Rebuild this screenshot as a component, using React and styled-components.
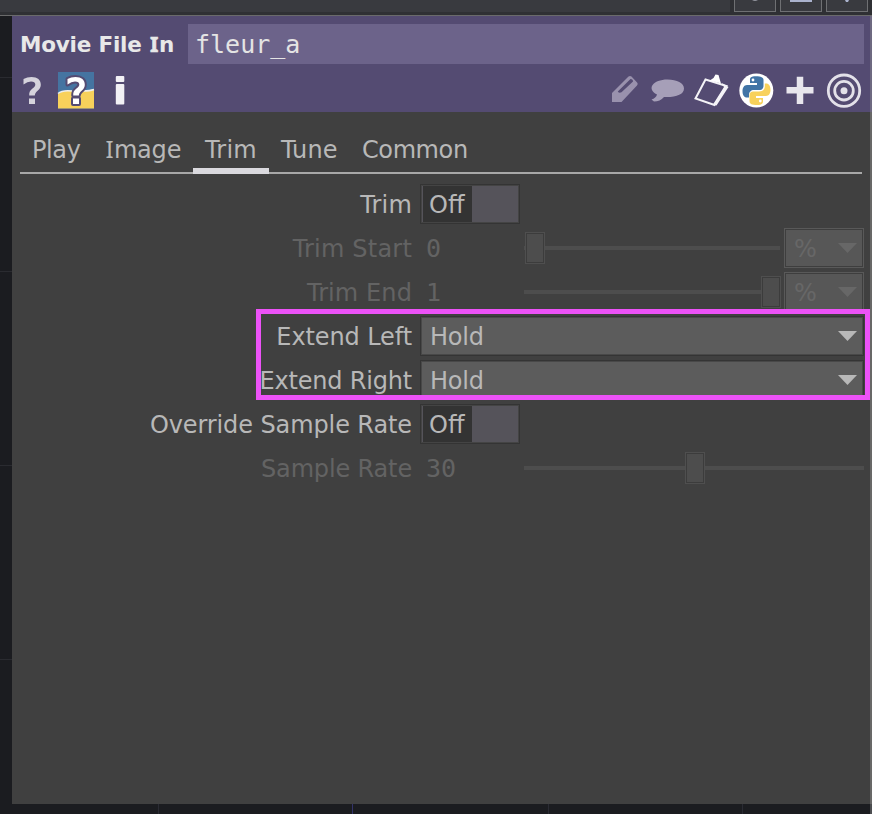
import React from "react";
import styled, { createGlobalStyle, css } from "styled-components";

const Global = createGlobalStyle`
  * { box-sizing: border-box; }
  html, body { margin: 0; padding: 0; background: #1b1c20; overflow: hidden; }
`;

const Window = styled.div`
  position: relative;
  width: 872px;
  height: 814px;
  display: flex;
  flex-direction: column;
  background: #1b1c20;
  font-family: "DejaVu Sans", Verdana, sans-serif;
  font-size: 24px;
  color: #b8b8b8;
  overflow: hidden;
`;

const TopBar = styled.div`
  flex: none;
  height: 16px;
  display: flex;
  background: #2f3034;
  border-bottom: 1px solid #6a6a6b;
`;

const TopBarFill = styled.div`
  width: 730px;
  height: 12px;
  margin-right: 4px;
  background: #393a3f;
`;

const TopButton = styled.div`
  width: 42px;
  height: 12px;
  margin-right: 4px;
  display: flex;
  justify-content: center;
  background: #393a3f;
  border: 1px solid #6f7073;
  border-top: 0;
`;

const Middle = styled.div`
  display: flex;
  height: 788px;
`;

const LeftGrid = styled.div`
  flex: none;
  width: 12px;
  display: grid;
  grid-template-rows: 62px 194px 194px 194px 1fr;
`;

const GridRow = styled.div`
  border-bottom: ${(p) => (p.$last ? "0" : "1px solid #2a2b30")};
`;

const BottomGrid = styled.div`
  display: grid;
  height: 10px;
  grid-template-columns: 159px 194px 196px 194px 127px 2px;
`;

const GridColumn = styled.div`
  border-right: 1px solid ${(p) => p.$line || "#2a2b33"};
`;

const Edge = styled.div`
  width: 2px;
  background: ${(p) => p.$color || "#686867"};
`;

const EdgeTop = styled.div`
  height: 96px;
  background: #6e6981;
`;

const Panel = styled.section`
  width: 858px;
  background: #404040;
`;

const Header = styled.header`
  height: 96px;
  background: #544b72;
`;

const NameRow = styled.div`
  display: flex;
  align-items: center;
  padding-top: 8px;
`;

const OperatorType = styled.div`
  width: 176px;
  height: 40px;
  padding-left: 8px;
  font-size: 21.5px;
  font-weight: bold;
  line-height: 42px;
  letter-spacing: -0.2px;
  color: #e8e8e8;
  white-space: nowrap;
`;

const SerifCap = styled.span`
  font-family: "Noto Sans", sans-serif;
  line-height: 1;
  margin: 0 ${(p) => (p.$bold ? 1 : 0.5)}px;
  -webkit-text-stroke: ${(p) => (p.$bold ? "0.6px #e8e8e8" : "0")};
`;

const OperatorName = styled.div`
  width: 676px;
  height: 40px;
  padding-left: 7px;
  background: #6c638a;
  font-family: "DejaVu Sans Mono", monospace;
  font-size: 25px;
  line-height: 42px;
  color: #e4e4e4;
`;

const ToolRow = styled.div`
  display: flex;
  justify-content: space-between;
  height: 48px;
`;

const ToolGroup = styled.div`
  display: flex;
  svg { display: block; }
`;

const Tabs = styled.nav`
  display: flex;
  width: 842px;
  height: 48px;
  margin: 14px 0 0 8px;
  border-bottom: 2px solid #a8a8a8;
`;

const Tab = styled.div`
  width: ${(p) => p.$width}px;
  height: 48px;
  padding-left: 12px;
  line-height: 49px;
  letter-spacing: ${(p) => p.$tracking || 0}px;
  white-space: nowrap;
  border-bottom: ${(p) => (p.$active ? "6px solid #dad9de" : "0")};
`;

const Form = styled.div`
  display: flex;
  flex-direction: column;
  gap: 4px;
  margin-top: 10px;
`;

const Row = styled.div`
  display: flex;
  height: 40px;
  color: ${(p) => (p.$disabled ? "#636363" : "#b8b8b8")};
`;

const Label = styled.div`
  width: 400px;
  margin-right: 8px;
  text-align: right;
  line-height: 42px;
  white-space: nowrap;
  letter-spacing: ${(p) => p.$tracking || 0}px;
`;

const Toggle = styled.div`
  width: 100px;
  height: 40px;
  display: flex;
  padding: 1px;
  border: 1px solid #343434;
  background: linear-gradient(#55535a, #55535a) content-box, #444;
`;

const ToggleState = styled.div`
  width: 49px;
  height: 36px;
  margin-left: 1px;
  padding-left: 6px;
  background: #333;
  line-height: 38px;
`;

const Value = styled.div`
  width: 104px;
  padding-left: 6px;
  font-family: "DejaVu Sans Mono", monospace;
  font-size: 25px;
  line-height: 41px;
`;

const Slider = styled.div`
  width: ${(p) => p.$width}px;
  display: flex;
  align-items: center;
`;

const trackFill = css`
  height: 4px;
  background: #4d4d4d;
`;

const TrackBefore = styled.div`
  ${trackFill}
  width: ${(p) => p.$width}px;
`;

const TrackAfter = styled.div`
  ${trackFill}
  flex: 1;
`;

const Handle = styled.div`
  width: 20px;
  height: 32px;
  flex: none;
  border: 1px solid #4f4f4f;
  background: #4d4d4d;
  box-shadow: inset 0 0 0 1px #3c3c3c;
`;

const Select = styled.div`
  display: flex;
  align-items: center;
  justify-content: space-between;
  width: ${(p) => p.$width}px;
  height: 40px;
  padding: 0 6px 0 9px;
  border: 1px solid #343434;
  box-shadow: inset 0 0 0 1px #484848;
  background: #5c5c5c;
  color: #b8b8b8;
`;

const SelectText = styled.span`
  height: 38px;
  line-height: 40px;
  letter-spacing: -0.2px;
`;

const UnitSelect = styled(Select)`
  margin-left: auto;
  margin-right: 6px;
  border-color: #595959;
  box-shadow: inset 0 0 0 1px #3e3e3e;
  background: #575757;
  color: #676767;
`;

const Callout = styled.div`
  position: absolute;
  left: 256px;
  top: 309px;
  width: 614px;
  height: 91px;
  border: 5px solid #ec52f7;
`;

const Arrow = () => (
  <svg width="19" height="10" viewBox="0 0 19 10">
    <path d="M0 0H19L9.5 10Z" fill="currentColor" />
  </svg>
);

const questionPath = "M1.500 3.500Q5 1.500 9.500 1.500C15.500 1.500 18.800 4.500 18.800 9C18.800 13 16.500 14.500 14.300 16.500Q12.800 18 12.800 20H7.200C7 16.500 8 15 10.500 13C12.500 11.500 13.300 10.500 13.300 9C13.300 7 11.800 6 9 6Q5.500 6 1.500 9ZM7 23H13V28.500H7Z";

const LeftTools = () => (
  <svg width="130" height="48" viewBox="12 64 130 48">
    <g transform="translate(22 75.5)">
      <path d={questionPath} fill="#d5d3dc" />
    </g>
    <rect x="58" y="72" width="36" height="36.500" fill="#4574a1" />
    <path d="M58 94Q64 89 74 91Q88 91 94 89V108.500H58Z" fill="#f8d15b" />
    <path d="M58 93.500Q62 90 72 91M83 91Q90 91 94 89.500" stroke="#eee" strokeWidth="1.500" fill="none" />
    <g transform="translate(66 75.500)">
      <path d={questionPath} fill="#fff" stroke="#544b72" strokeWidth="4" strokeLinejoin="round" paintOrder="stroke" />
    </g>
    <rect x="115.800" y="76" width="8.500" height="6" rx="1" fill="#f2f1f5" />
    <rect x="115.800" y="84" width="8.500" height="20.500" rx="1" fill="#f2f1f5" />
  </svg>
);

const RightTools = () => (
  <svg width="270" height="48" viewBox="600 64 270 48">
    <path d="M612 102V93L628.500 76.500Q630 75.500 631.500 76.500L637.500 83Q638 84 637 85.500L621.500 102ZM617.800 91.500Q619 93.500 621.500 92.300L633 81.500Q633 79 630.500 79Z" fill="#9991ad" fillRule="evenodd" />
    <path d="M667.500 79.500C677 79.500 684 83 684 88.500C684 94.500 676 97.500 664 97Q660 101.500 654 101.500L651.500 99.500Q656 98 657 94.500C646 89 653 79.500 667.500 79.500Z" fill="#a69fb8" />
    <path d="M705.500 79.500L726.500 86L714.500 105L695.500 98.500Z" fill="none" stroke="#f4f3f7" strokeWidth="2" />
    <path d="M722 83L728.500 87L716.500 105.500L713 104.500L724 87Z" fill="#f4f3f7" />
    <path d="M709 81L713.500 78L715.500 74.500L718.500 75L719.500 78.500L721 83.500L716 82Z" fill="#fff" />
    <circle cx="756.300" cy="90.500" r="17" fill="#fff" />
    <path d="M756 76.300C750.500 76.300 750 78 750 80V83H757V85H747C744 85 742.500 88 742.500 91C742.500 95 744 97.500 747 97.500H749V95C749 92 751 90 754 90H760C762 90 763.500 88 763.500 86V80C763.500 77.500 761 76.300 756 76.300Z" fill="#4174a6" />
    <path d="M757 105C762.500 105 763 103 763 101V98H756V96H766C769 96 770.500 93 770.500 90C770.500 86 769 83.500 766 83.500H764.800V86.500C764.800 90 762 91.500 759 91.500H753C751 91.500 749.500 93 749.500 95V101C749.500 104 752 105 757 105Z" fill="#f8d15b" />
    <circle cx="753" cy="80" r="1.400" fill="#fff" />
    <circle cx="760.300" cy="101" r="1.400" fill="#fff" />
    <path d="M786.500 90.300H813.500M800 76.700V104" stroke="#e8e6ed" strokeWidth="6.500" />
    <g fill="none" stroke="#e3e1e9" strokeWidth="2.800">
      <circle cx="844" cy="90.700" r="15.700" />
      <circle cx="844" cy="90.700" r="9.300" />
    </g>
    <circle cx="844" cy="90.700" r="3.500" fill="#e3e1e9" />
  </svg>
);

export default function App() {
  return (
    <Window>
      <Global />
      <TopBar>
        <TopBarFill />
        <TopButton>
          <svg width="8" height="2"><path d="M1 0H7L5 1H3Z" fill="#8b8d96" /></svg>
        </TopButton>
        <TopButton>
          <svg width="22" height="2"><path d="M0 0H22V2H0Z" fill="#aab2cd" /></svg>
        </TopButton>
        <TopButton>
          <svg width="8" height="2"><path d="M2 0H6L5 2H3Z" fill="#aab2cd" /></svg>
        </TopButton>
      </TopBar>
      <Middle>
        <LeftGrid>
          <GridRow /><GridRow /><GridRow /><GridRow /><GridRow $last />
        </LeftGrid>
        <Panel>
          <Header>
            <NameRow>
              <OperatorType>Movie File <SerifCap $bold>I</SerifCap>n</OperatorType>
              <OperatorName>fleur_a</OperatorName>
            </NameRow>
            <ToolRow>
              <ToolGroup><LeftTools /></ToolGroup>
              <ToolGroup><RightTools /></ToolGroup>
            </ToolRow>
          </Header>
          <Tabs>
            <Tab $width={73} $tracking={-0.4}>Play</Tab>
            <Tab $width={100} $tracking={-0.2}><SerifCap>I</SerifCap>mage</Tab>
            <Tab $width={76} $tracking={0.2} $active>Trim</Tab>
            <Tab $width={81} $tracking={0.1}>Tune</Tab>
            <Tab $width={130} $tracking={-0.4}>Common</Tab>
          </Tabs>
          <Form>
            <Row>
              <Label $tracking={0.2}>Trim</Label>
              <Toggle><ToggleState>Off</ToggleState></Toggle>
            </Row>
            <Row $disabled>
              <Label $tracking={0.2}>Trim Start</Label>
              <Value>0</Value>
              <Slider $width={256}><TrackBefore $width={1} /><Handle /><TrackAfter /></Slider>
              <UnitSelect $width={80}><SelectText>%</SelectText><Arrow /></UnitSelect>
            </Row>
            <Row $disabled>
              <Label $tracking={0.1}>Trim End</Label>
              <Value>1</Value>
              <Slider $width={257}><TrackBefore $width={237} /><Handle /></Slider>
              <UnitSelect $width={80}><SelectText>%</SelectText><Arrow /></UnitSelect>
            </Row>
            <Row>
              <Label $tracking={-0.1}>Extend Left</Label>
              <Select $width={444}><SelectText>Hold</SelectText><Arrow /></Select>
            </Row>
            <Row>
              <Label $tracking={-0.2}>Extend Right</Label>
              <Select $width={444}><SelectText>Hold</SelectText><Arrow /></Select>
            </Row>
            <Row>
              <Label $tracking={-0.1}>Override Sample Rate</Label>
              <Toggle><ToggleState>Off</ToggleState></Toggle>
            </Row>
            <Row $disabled>
              <Label $tracking={-0.15}>Sample Rate</Label>
              <Value>30</Value>
              <Slider $width={340}><TrackBefore $width={161} /><Handle /><TrackAfter /></Slider>
            </Row>
          </Form>
        </Panel>
        <Edge><EdgeTop /></Edge>
      </Middle>
      <BottomGrid>
        <GridColumn />
        <GridColumn $line="#33336a" />
        <GridColumn />
        <GridColumn />
        <GridColumn $line="#1b1c20" />
        <Edge $color="#4c4d50" />
      </BottomGrid>
      <Callout />
    </Window>
  );
}
